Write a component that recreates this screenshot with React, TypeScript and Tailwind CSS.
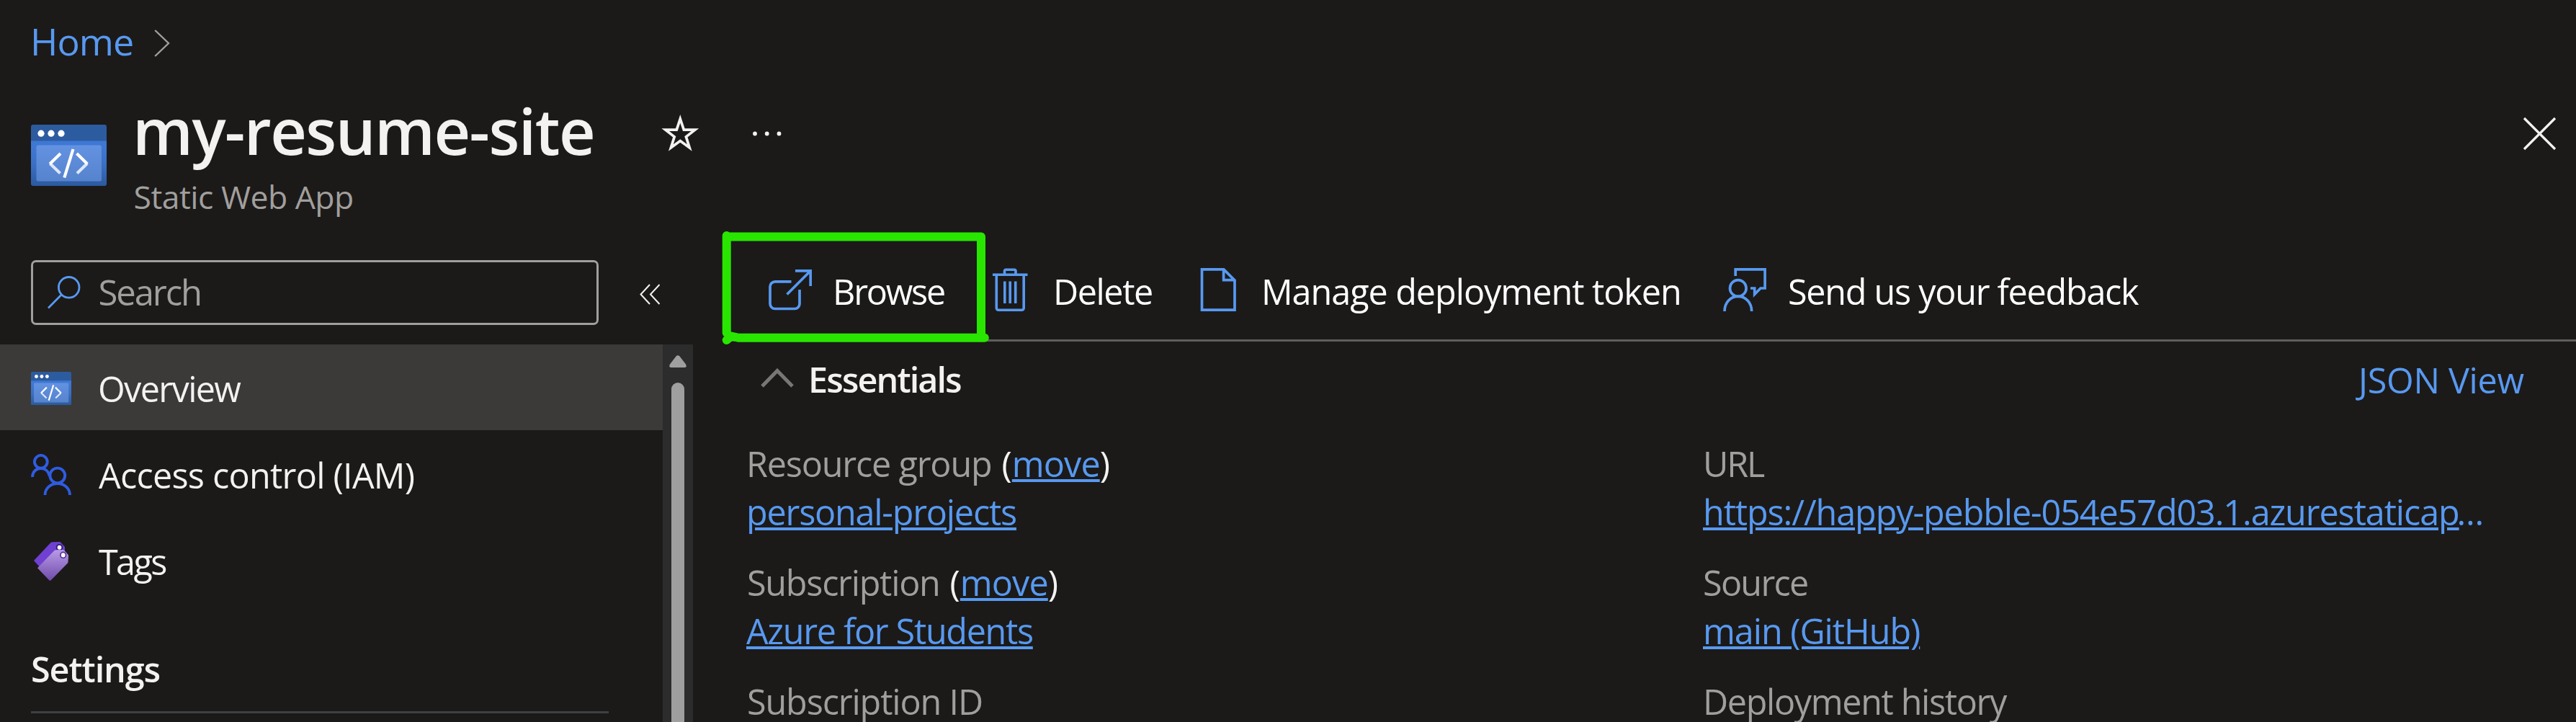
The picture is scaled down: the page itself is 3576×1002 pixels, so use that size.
import React from 'react';

const BLUE = '#5899f0';

function AppIcon({ className, id }: { className: string; id: string }) {
  return (
    <svg className={className} viewBox="0 0 105 85" preserveAspectRatio="none" fill="none">
      <defs>
        <linearGradient id={`${id}-body`} x1="0" y1="0" x2="0" y2="1">
          <stop offset="0.15" stopColor="#3e78d4" />
          <stop offset="0.5" stopColor="#3b70c6" />
          <stop offset="1" stopColor="#2c5a9f" />
        </linearGradient>
        <linearGradient id={`${id}-pane`} x1="0" y1="0" x2="0" y2="1">
          <stop offset="0" stopColor="#6392e2" />
          <stop offset="1" stopColor="#5683cc" />
        </linearGradient>
      </defs>
      <path d="M0 22H105V82a3 3 0 0 1-3 3H3a3 3 0 0 1-3-3Z" fill={`url(#${id}-body)`} />
      <path d="M3 0H102a3 3 0 0 1 3 3V22.5H0V3a3 3 0 0 1 3-3Z" fill="#2d5b9f" />
      <rect x="7.5" y="28.5" width="90.5" height="50" rx="2.5" fill={`url(#${id}-pane)`} />
      <circle cx="14" cy="12.2" r="4.6" fill="#fff" />
      <circle cx="28" cy="12.2" r="4.6" fill="#fff" />
      <circle cx="42" cy="12.2" r="4.6" fill="#fff" />
      <path d="M26.5 54 40.5 67.5M78 54 64 67.5" stroke="#dce7f8" strokeWidth="4.2" />
      <path d="M41 40 26.2 54.5M63.5 40 78.3 54.5M58.5 34 46.3 73.5" stroke="#fff" strokeWidth="4.2" />
    </svg>
  );
}

function PeopleIcon() {
  return (
    <svg className="h-[57px] w-14" viewBox="0 0 56 57" fill="none" stroke="#2f5ce0" strokeWidth="3.9">
      <circle cx="13.8" cy="10.8" r="8.9" />
      <path d="M2 32C2 25 7 20 13.5 20C19.5 20 24.5 24 26 31" />
      <circle cx="36.8" cy="30" r="10.4" />
      <path d="M19.5 57C19.5 48 27 41 36.8 41C46.5 41 54 48 54 57" />
    </svg>
  );
}

function TagsIcon() {
  return (
    <svg className="ml-1 h-[54px] w-12" viewBox="0 0 48 52" preserveAspectRatio="none">
      <defs>
        <linearGradient id="tag-front" x1="0" y1="0" x2="0" y2="1">
          <stop offset="0" stopColor="#b99ae6" />
          <stop offset="1" stopColor="#6f4cab" />
        </linearGradient>
      </defs>
      <path d="M0 25 23 1.5Q24.5 .2 26 .2L35.5 0Q36.5 0 37.2 .8L43 6.8V16L7.5 33Z" fill="#7040d2" />
      <circle cx="35.5" cy="7.5" r="4.7" fill="#321b70" />
      <circle cx="35.5" cy="7.5" r="2.9" fill="#fff" />
      <path d="M5 35 28 12Q29.5 10.800 31 10.800L40.500 10.600Q41.500 10.600 42.200 11.300L47.500 17Q48 17.600 48 18.500L47.500 27Q47.500 28 46.500 29L23.500 51.400Q22.500 52.200 21.500 51.400Z" fill="url(#tag-front)" />
      <circle cx="40.7" cy="17.7" r="4.7" fill="#55339a" />
      <circle cx="40.7" cy="17.7" r="2.9" fill="#fff" />
    </svg>
  );
}

const toolIcon = 'h-[60px] w-[60px] shrink-0';

function BrowseIcon() {
  return (
    <svg className={toolIcon} viewBox="0 0 60 60" fill="none" stroke={BLUE} strokeWidth="3.7">
      <path d="M31.500 18.800H9a7 7 0 0 0-7 7V49.500a7 7 0 0 0 7 7H36a7 7 0 0 0 7-7V30" />
      <path d="M25.500 36.500 58 4M37 3.800H58.200V25" />
    </svg>
  );
}

function TrashIcon() {
  return (
    <svg className={toolIcon} viewBox="0 0 60 60" fill="none" stroke={BLUE} strokeWidth="3.6">
      <path d="M6 9.200H54.500M22.500 8V4a1.700 1.700 0 0 1 1.700-1.700H36.300A1.700 1.700 0 0 1 38 4V8M11.300 10V55.500a2.700 2.700 0 0 0 2.700 2.700H46.500a2.700 2.700 0 0 0 2.700-2.700V10" />
      <path d="M22.800 18.500V49M30.200 18.500V49M37.700 18.500V49" />
    </svg>
  );
}

function DocumentIcon() {
  return (
    <svg className={toolIcon} viewBox="0 0 60 60" fill="none" stroke={BLUE} strokeWidth="3.7">
      <path d="M7.500 1.900H37.800L53 17V58.100H7.500ZM37.600 1.900V16.700H53" />
    </svg>
  );
}

function FeedbackIcon() {
  return (
    <svg className={toolIcon} viewBox="0 0 60 60" fill="none" stroke={BLUE} strokeWidth="3.7">
      <path d="M17.200 11V1.900H58.100V28H52L43.700 36.500V28H38" />
      <circle cx="20.800" cy="28" r="11.300" />
      <path d="M2 60C2 48 10 39.300 20.800 39.300C31.500 39.300 39.700 48 39.700 60" />
    </svg>
  );
}

function Highlight() {
  return (
    <svg className="pointer-events-none absolute left-9 top-[15px] h-[170px] w-[385px]" viewBox="0 0 385 170" fill="none" stroke="#28e600" strokeWidth="12" strokeLinecap="round" strokeLinejoin="round">
      <path d="M10.700 11V146M10.700 12.500H364M364 12.500V152M26.500 152.700H368.800M10.700 156 17 150.500 24 152" />
    </svg>
  );
}

const link = 'text-[#5899f0] underline decoration-[4px] underline-offset-[3px]';

function MoveLink() {
  return (
    <>
      <span className="text-[#f3f2f1]">(</span>
      <a className={`${link} tracking-[-0.9px]`}>move</a>
      <span className="text-[#f3f2f1]">)</span>
    </>
  );
}

export default function App() {
  return (
    <div className="h-[1002px] w-[3576px] overflow-hidden bg-[#1b1a19] font-['Open_Sans','Noto_Sans',sans-serif] text-[#f3f2f1]">
      <nav className="flex h-[89px] items-start pl-[42px] pt-[25px]">
        <a className="w-[172px] text-[52px] leading-[64px] tracking-[-0.92px] text-[#5899f0]">Home</a>
        <svg className="mt-4 h-[38px] w-[22px]" viewBox="0 0 22 38" fill="none" stroke="#a19f9d" strokeWidth="2.4">
          <path d="M1.200 1 20 19 1.200 37" />
        </svg>
      </nav>

      <header className="flex h-[212px] items-start pl-[43px]">
        <AppIcon id="header" className="mt-[84px] h-[85px] w-[105px]" />
        <div className="ml-9 w-[734px] pt-[42px]">
          <h1 className="whitespace-nowrap text-[88px] font-semibold leading-[100px] tracking-[-1.54px]">my-resume-site</h1>
          <p className="mt-[14px] pl-[1.5px] text-[44.5px] leading-[56px] tracking-[-0.51px] text-[#a19f9d]">Static Web App</p>
        </div>
        <svg className="mt-[70px] h-[52px] w-[53px]" viewBox="0 0 53 52" fill="none" stroke="#f3f2f1" strokeWidth="3.7" strokeMiterlimit="10">
          <path d="M26.300 6 31.300 21.200H46.800L34.400 30.800 39.200 46 26.300 36.600 13.400 46 18.200 30.800 5.800 21.200H21.300Z" />
        </svg>
        <svg className="ml-[74px] mt-[93px] h-[7px] w-10" viewBox="0 0 40 7" fill="#f3f2f1">
          <circle cx="3" cy="3.5" r="2.9" />
          <circle cx="19.7" cy="3.5" r="2.9" />
          <circle cx="36.5" cy="3.5" r="2.9" />
        </svg>
        <svg className="ml-auto mr-[27px] mt-[73px] h-[47px] w-[47px]" viewBox="0 0 47 47" stroke="#f3f2f1" strokeWidth="3.2">
          <path d="M2 2 45 45M45 2 2 45" />
        </svg>
      </header>

      <div className="flex h-[701px]">
        <aside className="flex w-[962px] shrink-0 flex-col">
          <div className="mt-[60px] flex items-center pl-[43px]">
            <div className="flex h-[90px] w-[788px] items-center rounded-[7px] border-[3px] border-[#a19f9d] pl-5">
              <svg className="h-[46px] w-[46px]" viewBox="0 0 46 46" fill="none" stroke={BLUE} strokeWidth="2.8">
                <circle cx="29.7" cy="15.8" r="14.3" />
                <path d="M19.500 25.800 1 44.500" />
              </svg>
              <span className="ml-[24.5px] pb-[3px] text-[49px] leading-[64px] tracking-[-2.12px] text-[#a19f9d]">Search</span>
            </div>
            <svg className="ml-[57px] mt-[5px] h-[29px] w-7" viewBox="0 0 28 29" fill="none" stroke="#f3f2f1" strokeWidth="2">
              <path d="M14 1 1.500 14.500 14 28M27.500 1 15 14.500 27.500 28" />
            </svg>
          </div>

          <div className="mt-[27px] flex h-[524px]">
            <div className="w-[920px] text-[48.5px] leading-[60px]">
              <ul className="flex flex-col gap-px">
                <li className="flex h-[119px] items-center bg-[#3b3a38] pl-[43px] pt-[2px]">
                  <AppIcon id="menu" className="h-[46px] w-14" />
                  <span className="ml-[37px] tracking-[-1.62px]">Overview</span>
                </li>
                <li className="flex h-[119px] items-center pl-[43px] pt-[2px]">
                  <PeopleIcon />
                  <span className="ml-[38px] tracking-[-0.73px]">Access control (IAM)</span>
                </li>
                <li className="flex h-[119px] items-center pl-[43px] pt-[2px]">
                  <TagsIcon />
                  <span className="ml-[42px] tracking-[-2.6px]">Tags</span>
                </li>
              </ul>
              <h2 className="mt-[61px] pl-[43px] font-semibold tracking-[-1.08px]">Settings</h2>
              <div className="ml-[43px] mt-[29px] h-[3px] w-[802px] bg-[#404040]" />
            </div>
            <div className="flex w-[42px] flex-col items-center bg-[#2c2c2c] pt-[15px]">
              <svg className="h-[17px] w-6 shrink-0" viewBox="0 0 24 17" fill="#9f9f9f">
                <path d="M9.500 1.500Q12-1 14.500 1.500L23 12.500Q25 17 21.500 17H2.500Q-1 17 1 12.500Z" />
              </svg>
              <div className="mt-[21px] w-[18px] flex-1 rounded-t-full bg-[#9f9f9f]" />
            </div>
          </div>
        </aside>

        <main className="relative w-[2614px]">
          <div className="ml-[42px] h-[173px] border-b-[3px] border-[#605e5c] pl-[63px] pt-[71px]">
            <div className="grid grid-cols-[305px_289px_731px_auto] whitespace-nowrap text-[48.5px] leading-[64px] text-white">
              <button className="flex gap-[29px] text-left">
                <BrowseIcon />
                <span className="tracking-[-2.2px]">Browse</span>
              </button>
              <button className="flex gap-[30px] text-left">
                <TrashIcon />
                <span className="tracking-[-1.44px]">Delete</span>
              </button>
              <button className="flex gap-[30px] text-left">
                <DocumentIcon />
                <span className="tracking-[-1.03px]">Manage deployment token</span>
              </button>
              <button className="flex gap-[30px] text-left">
                <FeedbackIcon />
                <span className="tracking-[-1.26px]">Send us your feedback</span>
              </button>
            </div>
          </div>
          <Highlight />

          <div className="mt-5 flex h-16 items-start text-[48.5px] leading-[64px]">
            <svg className="ml-[94px] mt-[17px] h-[27px] w-[46px]" viewBox="0 0 46 27" fill="none" stroke="#797775" strokeWidth="5">
              <path d="M2 25 23 3.500 44 25" />
            </svg>
            <h2 className="ml-5 font-semibold tracking-[-1.93px]">Essentials</h2>
            <a className="ml-auto w-[302px] pt-px tracking-[-0.3px] text-[#5899f0]">JSON View</a>
          </div>

          <div className="mt-[52px] grid grid-cols-[1328px_auto] gap-y-[31px] whitespace-nowrap pl-[74px] text-[48.5px] leading-[67px] text-[#a19f9d]">
            <div className="h-[134px]">
              <div className="flex">
                <span className="w-[354.5px] tracking-[-1.17px]">Resource group</span>
                <MoveLink />
              </div>
              <a className={`${link} tracking-[-1.2px]`}>personal-projects</a>
            </div>
            <div className="h-[134px]">
              <div className="tracking-[-2.15px]">URL</div>
              <a className={`${link} tracking-[-1.1px]`}>https://happy-pebble-054e57d03.1.azurestaticap</a>
              <span className="-ml-[3px] text-[#5899f0]">…</span>
            </div>
            <div className="h-[134px]">
              <div className="flex">
                <span className="w-[282.5px] pl-px tracking-[-1.25px]">Subscription</span>
                <MoveLink />
              </div>
              <a className={`${link} tracking-[-1.31px]`}>Azure for Students</a>
            </div>
            <div className="h-[134px]">
              <div className="tracking-[-1.71px]">Source</div>
              <a className={`${link} tracking-[-1.06px]`}>main (GitHub)</a>
            </div>
            <div className="pl-px tracking-[-1.12px]">Subscription ID</div>
            <div className="tracking-[-1.35px]">Deployment history</div>
          </div>
        </main>
      </div>
    </div>
  );
}
